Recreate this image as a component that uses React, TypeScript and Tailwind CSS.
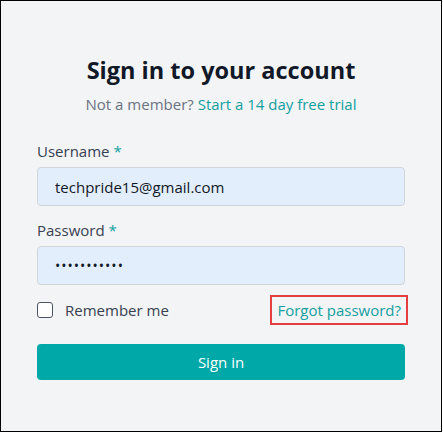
export default function App() {
  return (
    <div className="h-[432px] w-[442px] border border-black bg-[#f3f4f6] px-[36px] pt-[53px] font-['Open_Sans',sans-serif]">
      <h2 className="text-center text-[23.5px] font-bold leading-[32px] text-[#111827]">
        Sign in to your account
      </h2>
      <p className="mt-[8px] text-center text-[15px] leading-[20px] text-[#6b7280]">
        Not a member?{" "}
        <a href="#" className="font-medium text-[#14a09f]">
          Start a 14 day free trial
        </a>
      </p>
      <form className="mt-[27px] flex flex-col">
        <label className="text-[15px] leading-[20px] text-[#374151]">
          Username <span className="text-[#14a09f]">*</span>
        </label>
        <input
          type="text"
          defaultValue="techpride15@gmail.com"
          className="mt-[6px] h-[39px] w-full rounded-[4px] border border-[#d1d5db] bg-[#e3eefc] px-[17px] text-[15px] text-[#111827] outline-none"
        />
        <label className="mt-[14px] text-[15px] leading-[20px] text-[#374151]">
          Password <span className="text-[#14a09f]">*</span>
        </label>
        <input
          type="password"
          defaultValue="techpride15"
          className="mt-[6px] h-[39px] w-full rounded-[4px] border border-[#d1d5db] bg-[#e3eefc] px-[17px] text-[14px] tracking-[1px] text-[#111827] outline-none"
        />
        <div className="mt-[10px] flex items-center justify-between">
          <label className="flex items-center gap-[12px] text-[15px] text-[#374151]">
            <span className="h-[16px] w-[16px] rounded-[3px] border-[1.5px] border-[#4b5563] bg-white" />
            Remember me
          </label>
          <a
            href="#"
            className="-mr-[3px] border-2 border-[#e53e3e] px-[5px] py-[3px] text-[15px] font-medium leading-[20px] text-[#14a09f]"
          >
            Forgot password?
          </a>
        </div>
        <button
          type="button"
          className="mt-[19px] h-[36px] w-full rounded-[4px] bg-[#00a9a8] text-[15px] font-medium text-white"
        >
          Sign in
        </button>
      </form>
    </div>
  );
}
